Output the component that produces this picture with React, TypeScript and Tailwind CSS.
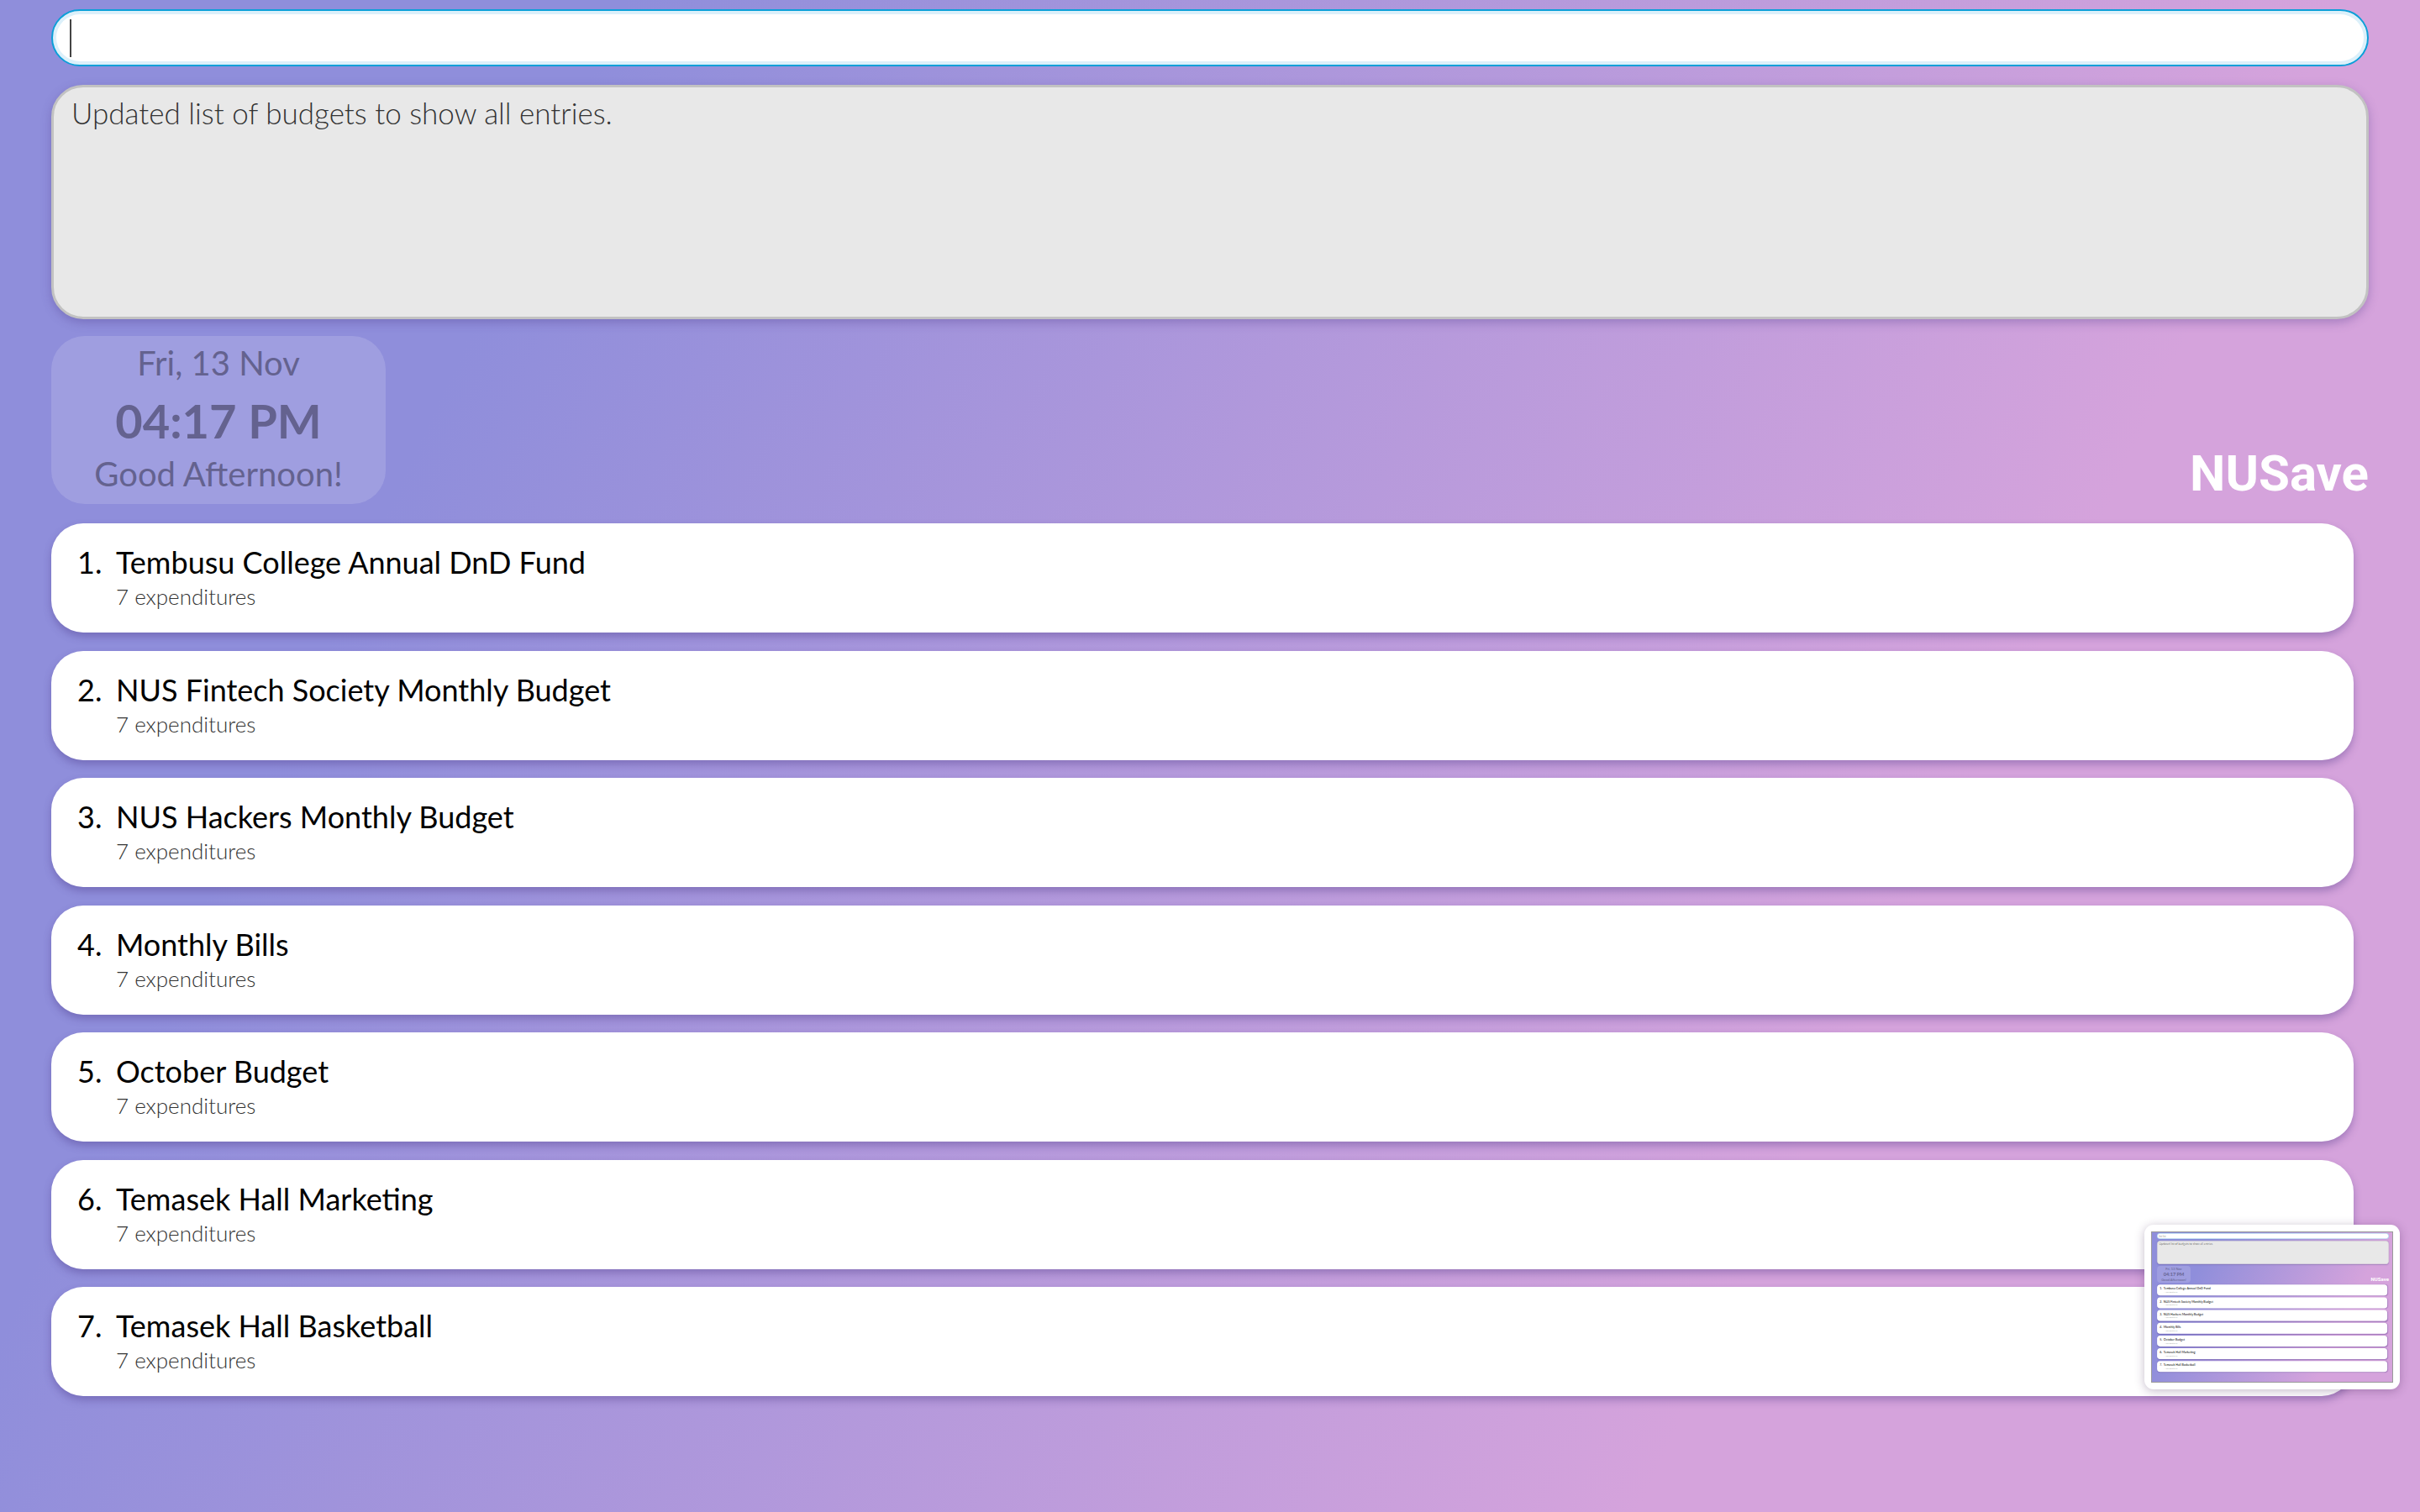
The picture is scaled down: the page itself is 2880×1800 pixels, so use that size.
import React from 'react'

const budgets = [
  'Tembusu College Annual DnD Fund',
  'NUS Fintech Society Monthly Budget',
  'NUS Hackers Monthly Budget',
  'Monthly Bills',
  'October Budget',
  'Temasek Hall Marketing',
  'Temasek Hall Basketball',
]

function Screen({ command }: { command?: string }) {
  return (
    <div className="relative min-h-screen w-full bg-[linear-gradient(115deg,#8f8edb_20%,#d5a3dc_75%)] font-['Lato',sans-serif]">
      <div className="flex flex-col px-[61px] pt-[11px]">
        {/* command box */}
        <div className="flex h-[68px] items-center rounded-full border-2 border-[#0b9fd8] bg-white pl-[20px] shadow-[inset_0_0_0_4px_#dcf0fa]">
          {command ? (
            <span className="text-[30px] text-[#9a9a9a]">{command}</span>
          ) : (
            <span className="h-[45px] w-[2px] bg-[#444]" />
          )}
        </div>

        {/* result display */}
        <div className="mt-[22px] h-[279px] rounded-[38px] border-[3px] border-[#c2c2c2] bg-[#e8e8e8] px-[21px] pt-[9px] text-[35px] leading-[1.2] font-light text-[#333] shadow-[0_4px_12px_rgba(80,60,140,0.35)]">
          Updated list of budgets to show all entries.
        </div>

        <div className="mt-[20px] flex items-end justify-between">
          <div className="flex h-[200px] w-[398px] flex-col items-center rounded-[40px] bg-white/15 pt-[12px] text-[#64628f]">
            <div className="text-[40px] leading-none">Fri, 13 Nov</div>
            <div className="mt-[21px] text-[56px] leading-none font-bold">04:17 PM</div>
            <div className="mt-[15px] text-[40px] leading-none">Good Afternoon!</div>
          </div>
          <div className="mb-[6px] font-['Roboto',sans-serif] text-[60px] leading-none font-bold text-white">
            NUSave
          </div>
        </div>

        {/* budget list */}
        <div className="mt-[23px] flex flex-col gap-[21.5px] pr-[18px]">
          {budgets.map((name, i) => (
            <div
              key={i}
              className="h-[130px] rounded-[38px] bg-white pt-[28px] pl-[31px] shadow-[0_5px_10px_rgba(70,50,130,0.35)]"
            >
              <div className="flex text-[36px] leading-none text-black">
                <span className="w-[46px]">{i + 1}.</span>
                <span>{name}</span>
              </div>
              <div className="mt-[10px] ml-[46px] text-[26px] leading-none font-light text-[#333]">
                7 expenditures
              </div>
            </div>
          ))}
        </div>
      </div>
    </div>
  )
}

export default function App() {
  return (
    <div className="relative">
      <Screen />

      {/* screenshot preview thumbnail */}
      <div className="absolute top-[1458px] left-[2552px] rounded-[11px] bg-white p-[8px] shadow-[0_2px_12px_rgba(60,30,80,0.3)]">
        <div className="relative h-[180px] w-[288px] overflow-hidden border border-[#9a9a9a]">
          <div className="absolute top-0 left-0 h-[1800px] w-[2880px] origin-top-left scale-[0.1]">
            <Screen command="list list" />
          </div>
        </div>
      </div>
    </div>
  )
}
